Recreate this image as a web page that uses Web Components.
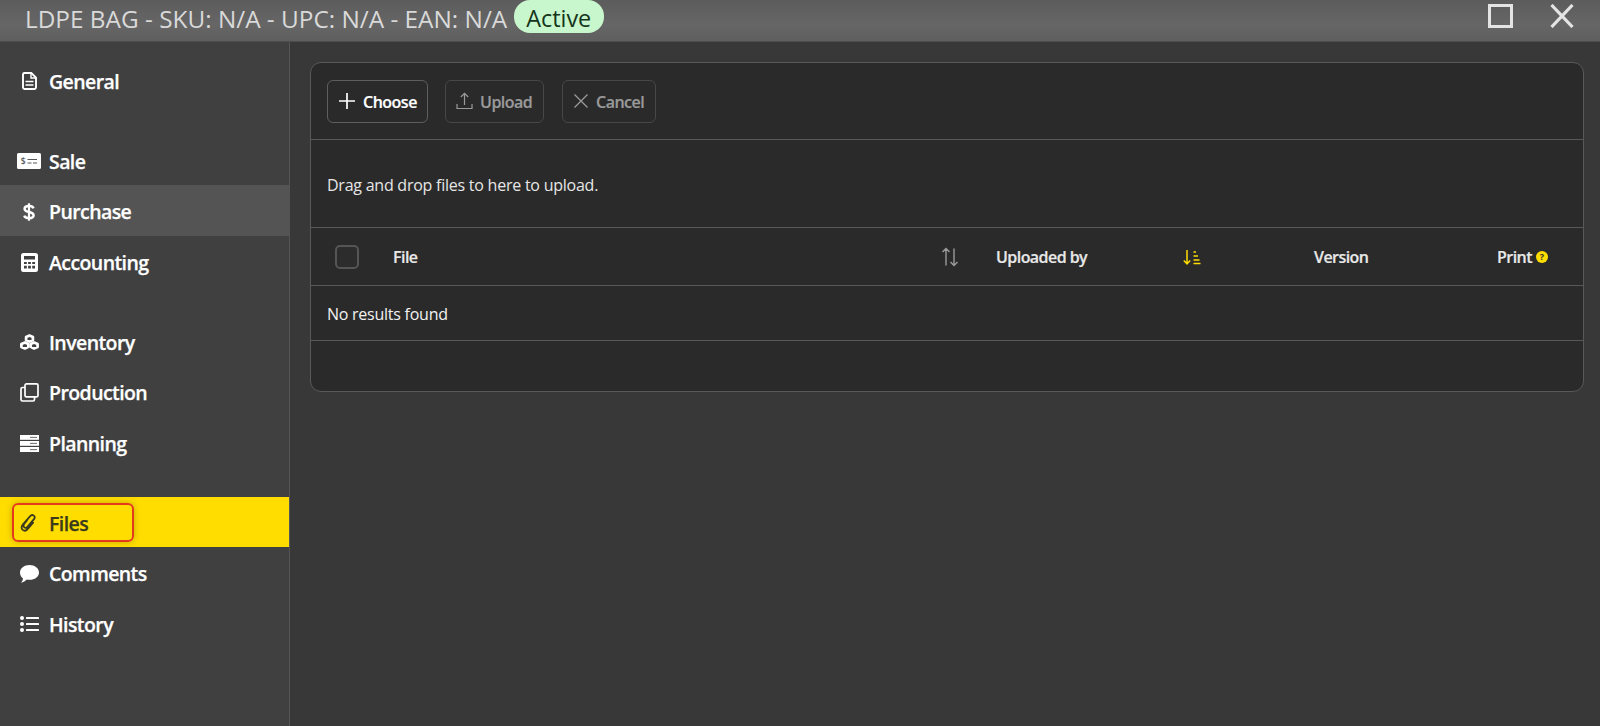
<!DOCTYPE html>
<html><head><meta charset="utf-8"><title>LDPE BAG</title>
<style>
html,body{margin:0;height:100%;background:#383838;overflow:hidden}
body{font-family:"Open Sans","Noto Sans","Liberation Sans",sans-serif;color:#fff}
</style></head>
<body>
<app-shell>
  <title-bar slot="top"></title-bar>
  <side-nav slot="side">
    <nav-group>
      <nav-item label="General" icon="general"></nav-item>
    </nav-group>
    <nav-group>
      <nav-item label="Sale" icon="sale"></nav-item>
      <nav-item label="Purchase" icon="purchase" state="hover"></nav-item>
      <nav-item label="Accounting" icon="accounting"></nav-item>
    </nav-group>
    <nav-group>
      <nav-item label="Inventory" icon="inventory"></nav-item>
      <nav-item label="Production" icon="production"></nav-item>
      <nav-item label="Planning" icon="planning"></nav-item>
    </nav-group>
    <nav-group>
      <nav-item label="Files" icon="files" state="active"></nav-item>
      <nav-item label="Comments" icon="comments"></nav-item>
      <nav-item label="History" icon="history"></nav-item>
    </nav-group>
  </side-nav>
  <file-panel slot="main"></file-panel>
</app-shell>
<script>
const ICONS={
general:'<svg width="15" height="18" viewBox="0 0 15 18" fill="none" stroke="currentColor" stroke-width="1.900"><path d="M2.500 1h6.800l4.700 4.700v10A1.500 1.500 0 0 1 12.500 17h-10A1.500 1.500 0 0 1 1 15.700V2.500A1.500 1.500 0 0 1 2.500 1z"/><path d="M9 1v5h5" stroke-width="1.400"/><path d="M3.500 9.500h8M3.500 13h8" stroke-width="1.700"/></svg>',
sale:'<svg width="24" height="16" viewBox="0 0 24 16"><path fill="currentColor" d="M1.500 0h21A1.500 1.500 0 0 1 24 1.500v13a1.500 1.500 0 0 1-1.500 1.500h-21A1.500 1.500 0 0 1 0 14.500v-13A1.500 1.500 0 0 1 1.500 0z"/><path d="M10.500 6.500h9.500M10.500 10h4M16 10h4" stroke="#585858" stroke-width="1.200" fill="none"/><text x="6" y="11" font-size="8.500" font-family="Open Sans,sans-serif" fill="#585858" text-anchor="middle">$</text></svg>',
purchase:'<svg width="12" height="18" viewBox="0 0 12 18" fill="none" stroke="currentColor" stroke-width="2.500"><path d="M10.500 5.300C10 3.700 8.200 3 6 3 3.500 3 1.600 4.100 1.600 5.900 1.600 7.700 3.500 8.300 6 9c2.600.7 4.600 1.400 4.600 3.200 0 1.900-2 2.900-4.600 2.900-2.400 0-4.200-.8-4.700-2.500"/><path d="M6 .3v17.400" stroke-width="2.200"/></svg>',
accounting:'<svg width="17" height="19" viewBox="0 0 17 19"><path fill="currentColor" fill-rule="evenodd" d="M2.500 0h12A2.500 2.500 0 0 1 17 2.500v14a2.500 2.500 0 0 1-2.500 2.500h-12A2.500 2.500 0 0 1 0 16.500v-14A2.500 2.500 0 0 1 2.500 0zM3 3v3.500h11V3zM3 9v2h2.800V9zm4.100 0v2h2.800V9zm4.100 0v2H14V9zM3 12.800V15.500h2.800v-2.700zm4.100 0V15.500h2.800v-2.700zm4.100 0V15.500H14v-2.700z"/></svg>',
inventory:'<svg width="19" height="16" viewBox="0 0 19 16" fill="none" stroke="currentColor" stroke-width="2.700" stroke-linejoin="round"><path d="M9.500 1.500l3.400 1.500v3L9.500 7.600 6.100 6V3z"/><path d="M5 8.400l3.300 1.500v3L5 14.500l-3.600-1.600v-3z"/><path d="M14 8.400l3.600 1.500v3L14 14.500l-3.300-1.600v-3z"/></svg>',
production:'<svg width="19" height="19" viewBox="0 0 19 19" fill="none" stroke="currentColor" stroke-width="1.700"><rect x="5" y=".9" width="13" height="13" rx="1.500"/><path d="M5 4.500H2.500A1.500 1.500 0 0 0 1 6v10.500A1.500 1.500 0 0 0 2.500 18H13a1.500 1.500 0 0 0 1.500-1.500V14"/></svg>',
planning:'<svg width="19" height="17" viewBox="0 0 19 17" fill="currentColor"><path d="M0 0h19v4.800H0z"/><path d="M0 6h19v4.800H0z"/><path d="M0 12h19v5H0z"/><path d="M10 2.400h7M10 8.400h7M10 14.600h7" stroke="#5a5a5a" stroke-width=".9"/></svg>',
files:'<svg width="18" height="18" viewBox="0 0 18 18" fill="none" stroke="currentColor" stroke-width="1.800" stroke-linecap="round"><path d="M7 6.500L4.300 9.800c-1.100 1.300-1 2.800 0 3.600 1 .8 2.300.5 3.300-.7l6.400-7.500c1-1.200 1-2.700-.2-3.600-1.200-.9-2.700-.6-3.800.7L2.800 10.600c-1.600 1.900-1.600 4.100-.1 5.300 1.500 1.200 3.600.8 5.100-1l5.300-6.200"/></svg>',
comments:'<svg width="19" height="18" viewBox="0 0 19 18" fill="currentColor"><path d="M9.500 0C14.800 0 19 3.300 19 7.400s-4.200 7.400-9.500 7.400c-.9 0-1.900-.1-2.700-.3C5.500 16 3.400 17.500.8 17.800c1.200-1.300 2-2.800 2.200-4.400C1.100 12 0 9.900 0 7.400 0 3.300 4.200 0 9.500 0z"/></svg>',
history:'<svg width="19" height="16" viewBox="0 0 19 16" fill="currentColor"><circle cx="2" cy="2" r="2"/><circle cx="2" cy="8" r="2"/><circle cx="2" cy="14" r="2"/><rect x="6" y="1" width="13" height="2" rx=".6"/><rect x="6" y="7" width="13" height="2" rx=".6"/><rect x="6" y="13" width="13" height="2" rx=".6"/></svg>'
};
function def(name,css,html){
  customElements.define(name,class extends HTMLElement{
    connectedCallback(){
      if(this.shadowRoot)return;
      const r=this.attachShadow({mode:'open'});
      r.innerHTML='<style>'+css+'</style>'+(typeof html==='function'?html(this):html);
    }
  });
}
def('app-shell',`:host{display:grid;grid-template-columns:290px minmax(0,1fr);grid-template-rows:42px 1fr;height:726px}
 .top{grid-column:1/3;min-width:0}`,`<div class="top"><slot name="top"></slot></div><slot name="side"></slot><slot name="main"></slot>`);
def('title-bar',`:host{display:flex;align-items:center;height:42px;box-sizing:border-box;padding:0 0 4px 25px;background:linear-gradient(#5c5c5c,#666 60%,#5e5e5e);border-bottom:1px solid #4e4e4e;color:#d9d9d9;font-size:24.350px;white-space:nowrap;overflow:hidden}
 .pill{background:#c9f7cd;color:#14351a;border-radius:16px;height:33px;line-height:36px;margin:0 0 0 6.500px;font-size:23.400px;align-self:flex-start;width:90px;box-sizing:border-box;text-align:center}
 .sp{flex:1}.act{display:flex;align-items:center;gap:37px;margin-right:26px;align-self:flex-start;padding-top:4px}
 svg{display:block}`,
`<span>LDPE BAG - SKU: N/A - UPC: N/A - EAN: N/A</span><span class="pill">Active</span><span class="sp"></span>
 <span class="act"><svg width="25" height="24" viewBox="0 0 25 24"><rect x="1.500" y="1.500" width="22" height="21" fill="none" stroke="#e4e4e4" stroke-width="3"/></svg>
 <svg width="24" height="24" viewBox="0 0 24 24"><path d="M1.500 1l21 22M22.500 1l-21 22" stroke="#e4e4e4" stroke-width="3.200"/></svg></span>`);
def('side-nav',`:host{display:flex;flex-direction:column;gap:29.500px;padding-top:12.500px;background:#404040;border-right:1px solid #555;box-sizing:border-box;width:290px;height:684px}`,`<slot></slot>`);
def('nav-group',`:host{display:flex;flex-direction:column}`,`<slot></slot>`);
def('nav-item',`:host{display:flex;align-items:center;height:50.500px;box-sizing:border-box;padding-top:3px;font-size:19.500px;font-weight:600;color:#fff;letter-spacing:-.58px;-webkit-text-stroke:.25px currentColor;position:relative;flex:none}
 :host([state=hover]){background:#545454}
 :host([state=active]){background:#ffdd00;color:#3a3a1c}
 .i{width:58px;margin-right:-9px;flex:none;display:flex;justify-content:center}
 svg{display:block}
 .ring{position:absolute;left:12px;top:6px;width:122px;height:39px;border:2px solid #e5391e;border-radius:6px;box-sizing:border-box;box-shadow:0 0 6px rgba(90,70,0,.35)}`,
 h=>`<span class="i">${ICONS[h.getAttribute('icon')]}</span><span>${h.getAttribute('label')}</span>${h.getAttribute('state')==='active'?'<span class="ring"></span>':''}`);
def('tool-btn',`:host{display:inline-flex;align-items:center;height:43px;box-sizing:border-box;border:1px solid #474747;border-radius:6px;padding:2px 10px 0;gap:7px;font-size:16px;font-weight:600;letter-spacing:-.5px;color:#9a9a9a;-webkit-text-stroke:.2px currentColor}
 :host([primary]){color:#fff;border-color:#5e5e5e}
 ::slotted(svg){display:block;margin-top:-2px}`,
 `<slot name="i"></slot><span><slot></slot></span>`);
def('file-panel',`:host{display:block;padding:20px 16px 0 20px;background:#383838;height:684px;box-sizing:border-box}
 .card{background:#2a2a2a;border:1px solid #585858;border-radius:11px;height:330px;box-sizing:border-box;display:flex;flex-direction:column;overflow:hidden}
 .bar{display:flex;gap:17px;align-items:center;padding:0 16px;height:76px;flex:none;border-bottom:1px solid #585858}
 .drop{height:88px;box-sizing:border-box;flex:none;display:flex;align-items:center;padding:2px 16px 0;border-bottom:1px solid #585858;font-size:16px;letter-spacing:-.24px;color:#e6e6e6}
 .head{display:grid;grid-template-columns:82px 548px 55px 187px 131px 183px minmax(0,1fr);height:58px;box-sizing:border-box;flex:none;align-items:center;border-bottom:1px solid #585858}
 .cb{width:24px;height:24px;box-sizing:border-box;border:2px solid #555;border-radius:5px;background:#2c2c2c;margin-left:24px}
 .t{font-size:16px;font-weight:600;letter-spacing:-.55px;color:#e8e8e8;-webkit-text-stroke:.2px currentColor;white-space:nowrap;display:flex;align-items:center;gap:4px}
 .none{height:55px;box-sizing:border-box;flex:none;display:flex;align-items:center;padding:1px 0 0 16px;border-bottom:1px solid #585858;font-size:16px;letter-spacing:-.25px;color:#f2f2f2}
 .foot{flex:1}
 svg{display:block;flex:none}
 .q{width:12px;height:12px;border-radius:50%;background:#ffdd00;color:#333;font:700 9px/12px "Open Sans",sans-serif;text-align:center;letter-spacing:0;-webkit-text-stroke:0}`,
`<div class="card">
 <div class="bar">
  <tool-btn primary style="width:101px"><svg slot="i" width="18" height="18" viewBox="0 0 18 18"><path d="M9 1v16M1 9h16" stroke="#fff" stroke-width="1.700"/></svg>Choose</tool-btn>
  <tool-btn style="width:99px"><svg slot="i" width="17" height="18" viewBox="0 0 17 18" fill="none" stroke="#9a9a9a" stroke-width="1.200"><path d="M8.500 13V1.500M4.800 5l3.700-3.700L12.200 5M1 12v4.500h15V12"/></svg>Upload</tool-btn>
  <tool-btn style="width:94px;margin-left:1px"><svg slot="i" width="16" height="16" viewBox="0 0 16 16"><path d="M1.500 1.500l13 13M14.500 1.500l-13 13" stroke="#9a9a9a" stroke-width="1.300"/></svg>Cancel</tool-btn>
 </div>
 <div class="drop">Drag and drop files to here to upload.</div>
 <div class="head">
  <div class="cb"></div>
  <div class="t">File</div>
  <div><svg width="18" height="20" viewBox="0 0 18 20" fill="none" stroke="#9b9b9b" stroke-width="1.400"><path d="M5 18.500V1.500M1.500 5L5 1.500 8.500 5M13 1.500v17M9.500 15l3.500 3.500 3.500-3.500"/></svg></div>
  <div class="t">Uploaded by</div>
  <div><svg width="18" height="16" viewBox="0 0 18 16" fill="none" stroke="#ffdd00" stroke-width="1.500"><path d="M4 1v13.500M.8 11.500L4 14.800l3.200-3.300M10.500 3h2.500M10.500 7h4.500M10.500 11h6M10.500 14.500h7"/></svg></div>
  <div class="t">Version</div>
  <div class="t">Print<span class="q">?</span></div>
 </div>
 <div class="none">No results found</div>
 <div class="foot"></div>
</div>`);
</script>
</body></html>
